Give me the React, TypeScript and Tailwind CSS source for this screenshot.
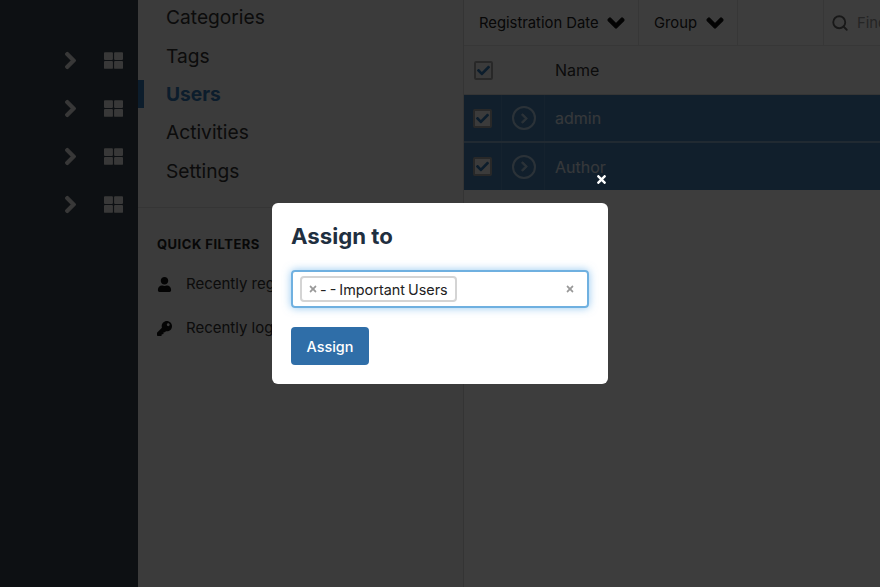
import React from "react";
import { FaChevronDown, FaChevronRight, FaCheck, FaUser, FaKey, FaTimes, FaThLarge } from "react-icons/fa";
import { FiSearch } from "react-icons/fi";

function Check() {
  return (
    <span className="flex h-[19px] w-[19px] items-center justify-center rounded-[2px] border-2 border-[#a8a8a8] bg-[#f4f4f4] text-[#337ab7]">
      <FaCheck className="h-[13px] w-[13px]" />
    </span>
  );
}

function Row({ name, bordered }: { name: string; bordered?: boolean }) {
  return (
    <div className={`flex items-center bg-[#4a84b6] ${bordered ? "h-[48px] border-b-2 border-[#8aafd0]" : "h-[47px]"}`}>
      <div className="flex h-full w-[38px] shrink-0 items-center justify-center border-r border-[#5a90c0]"><Check /></div>
      <div className="flex h-full w-[43px] shrink-0 items-center justify-center border-r border-[#5a90c0] pl-[2px]">
        <span className="flex h-[24px] w-[24px] items-center justify-center rounded-full border-2 border-[#b5d0e8] text-[#b5d0e8]">
          <FaChevronRight className="h-[11px] w-[11px] [stroke-width:40px]" />
        </span>
      </div>
      <span className="pl-[10px] text-[16px] text-[#e0eaf4]">{name}</span>
    </div>
  );
}

export default function App() {
  const nav = ["Categories", "Tags", "Users", "Activities", "Settings"];
  return (
    <div className="relative flex h-[587px] w-[880px] overflow-hidden bg-white text-[#333] [font-family:Inter,'Liberation_Sans',sans-serif]">
      <aside className="flex w-[138px] shrink-0 flex-col bg-[#36434f] pt-[36px]">
        {[0, 1, 2, 3].map((i) => (
          <div key={i} className="flex h-[48px] items-center text-[#e8e8e8]">
            <FaChevronRight className="ml-[64px] h-[19px] w-[13px] [stroke-width:30px]" />
            <FaThLarge className="ml-[27px] h-[19px] w-[19px]" />
          </div>
        ))}
      </aside>

      <section className="flex w-[326px] shrink-0 flex-col border-r border-[#d8d8d8] bg-[#f4f4f4]">
        <nav className="-mt-[1.5px] border-b border-[#dcdcdc] pb-[16.5px]">
          {nav.map((n) => (
            <div key={n} className="flex h-[38.4px] items-center">
              <span className={`h-[28px] w-[6px] ${n === "Users" ? "bg-[#337ab7]" : ""}`} />
              <span className={`pl-[22px] text-[19.2px] ${n === "Users" ? "font-bold text-[#337ab7]" : "text-[#333]"}`}>{n}</span>
            </div>
          ))}
        </nav>
        <h3 className="pl-[19px] pt-[27px] text-[13px] font-bold tracking-[0.5px] text-[#222]">QUICK FILTERS</h3>
        <div className="mt-[18px] flex h-[24px] items-center pl-[19px] text-[15px] text-[#333]">
          <FaUser className="h-[15px] w-[15px] text-[#111]" />
          <span className="pl-[14px]">Recently registered</span>
        </div>
        <div className="mt-[20px] flex h-[24px] items-center pl-[19px] text-[15px] text-[#333]">
          <FaKey className="h-[15px] w-[15px] text-[#111]" />
          <span className="pl-[14px]">Recently logged in</span>
        </div>
      </section>

      <main className="flex min-w-0 flex-1 flex-col bg-white">
        <div className="flex h-[46px] shrink-0 items-center border-b border-[#e6e6e6] text-[14.8px] text-[#222]">
          <div className="flex h-full w-[175px] shrink-0 items-center justify-between whitespace-nowrap border-r border-[#e6e6e6] pl-[15px] pr-[13px]">
            <span className="pt-[2px]">Registration Date</span>
            <FaChevronDown className="h-[18px] w-[18px] text-[#111] [stroke-width:50px]" />
          </div>
          <div className="flex h-full w-[99px] shrink-0 items-center justify-between border-r border-[#e6e6e6] pl-[15px] pr-[13px]">
            <span className="pt-[2px]">Group</span>
            <FaChevronDown className="h-[18px] w-[18px] text-[#111] [stroke-width:50px]" />
          </div>
          <div className="h-full w-[86px] shrink-0 border-r border-[#e6e6e6]" />
          <div className="flex items-center pl-[7px] text-[#999]">
            <FiSearch className="h-[18px] w-[18px] stroke-[2.5] text-[#666]" />
            <span className="pl-[8px] pt-[2px]">Find</span>
          </div>
        </div>
        <div className="flex h-[49px] shrink-0 items-center border-b border-[#dddddd] bg-[#fbfbfb]">
          <div className="flex w-[38px] shrink-0 items-center justify-center"><Check /></div>
          <span className="pl-[53px] text-[16px] text-[#333]">Name</span>
        </div>
        <Row name="admin" bordered />
        <Row name="Author" />
      </main>

      <div className="absolute inset-0 flex justify-center bg-[#000000c2] pt-[203px]">
        <FaTimes className="absolute left-[595px] top-[173px] h-[13px] w-[13px] text-white" />
        <div className="h-[181px] w-[336px] rounded-[6px] bg-white px-[19px] pt-[18px]">
          <h2 className="text-[22.2px] font-bold leading-[29px] text-[#1f2f40]">Assign to</h2>
          <div className="mt-[20px] flex h-[38px] items-center rounded-[4px] border-2 border-[#6fb0e0] pl-[7px] pr-[12px] shadow-[0_0_8px_rgba(102,175,233,0.7)]">
            <div className="flex h-[26px] w-[157px] items-center rounded-[4px] border-2 border-[#d4d4d4] pl-[6px] text-[14.4px] text-[#222]">
              <FaTimes className="h-[10px] w-[10px] text-[#999]" />
              <span className="whitespace-nowrap pl-[2px] pt-[1px] [word-spacing:-1px]">- - Important Users</span>
            </div>
            <FaTimes className="ml-auto h-[10px] w-[10px] text-[#999]" />
          </div>
          <button className="mt-[19px] flex h-[38px] w-[78px] items-center justify-center rounded-[4px] bg-[#2f6ea8] pt-[1px] text-[14.4px] font-medium text-white">
            Assign
          </button>
        </div>
      </div>
    </div>
  );
}
